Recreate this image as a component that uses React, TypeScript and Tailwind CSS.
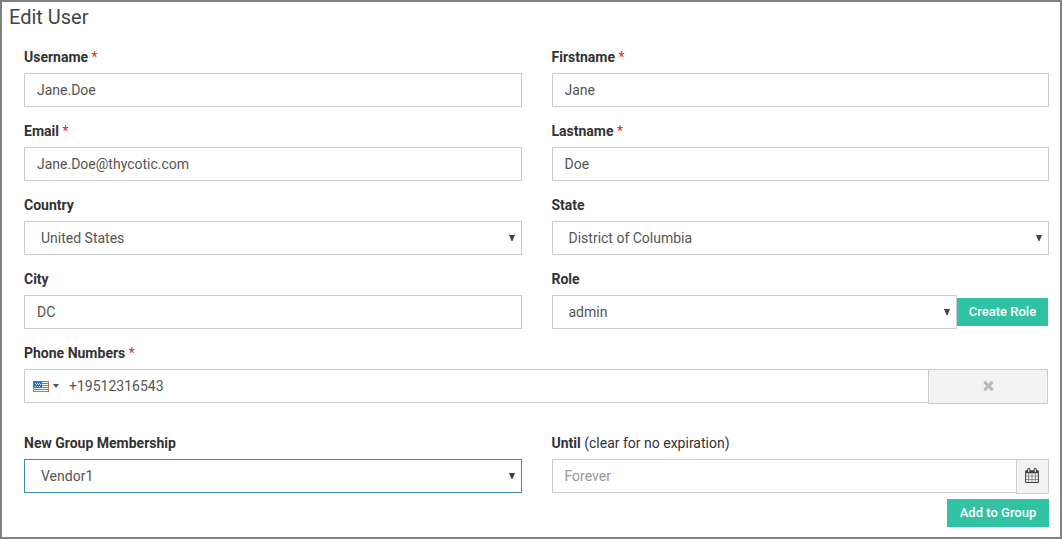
import { useState, type ReactNode, type InputHTMLAttributes, type SelectHTMLAttributes } from "react";

const control =
  "block h-[34px] w-full min-w-0 rounded-none border border-[#ccc] bg-white text-sm text-[#555] outline-none placeholder:text-[#999]";

function Label({ htmlFor, children, required }: { htmlFor: string; children: ReactNode; required?: boolean }) {
  return (
    <label htmlFor={htmlFor} className="mb-1.5 block text-sm leading-5 font-bold text-[#333]">
      {children}
      {required && <span className="font-normal text-[#e02b2b]"> *</span>}
    </label>
  );
}

function TextInput(props: InputHTMLAttributes<HTMLInputElement>) {
  return <input {...props} className={`${control} px-3`} />;
}

function Select({
  options,
  active,
  ...props
}: SelectHTMLAttributes<HTMLSelectElement> & { options: string[]; active?: boolean }) {
  return (
    <div className="relative min-w-0 flex-1">
      <select
        {...props}
        className={
          active
            ? "block h-[34px] w-full appearance-none rounded-none border border-[#3c8dbc] bg-white px-4 text-sm text-[#555] outline-none"
            : `${control} appearance-none px-4`
        }
      >
        {options.map((option) => (
          <option key={option}>{option}</option>
        ))}
      </select>
      <svg
        viewBox="0 0 6 6"
        className="pointer-events-none absolute top-3.5 right-[7px] size-1.5 fill-[#444]"
        aria-hidden="true"
      >
        <path d="M0 0H6L3.5 6H2.5Z" />
      </svg>
    </div>
  );
}

function Flag() {
  return (
    <svg viewBox="0 0 16 11" className="h-[11px] w-4" shapeRendering="crispEdges" aria-hidden="true">
      <rect width="16" height="11" fill="#fff" />
      <path d="M0 2H16V3H0ZM0 4H16V5H0ZM0 6H16V7H0ZM0 8H16V9H0Z" fill="#f0503c" />
      <rect x="1" y="1" width="8" height="6" fill="#1f6fe8" />
      <path
        d="M2 2h1v1H2zM4 2h1v1H4zM6 2h1v1H6zM3 3h1v1H3zM5 3h1v1H5zM7 3h1v1H7zM2 5h1v1H2zM4 5h1v1H4zM6 5h1v1H6z"
        fill="#cfe2ff"
      />
      <path d="M0 0H16V11H0ZM1 1V10H15V1Z" fillRule="evenodd" fill="#c8754f" />
      <path d="M0 0H9V1H0ZM0 1H1V7H0Z" fill="#6b79a8" />
    </svg>
  );
}

function TimesIcon() {
  return (
    <svg viewBox="0 0 1792 1792" className="mb-0.5 size-[15px] fill-current" aria-hidden="true">
      <path d="M1490 1322q0 40-28 68l-136 136q-28 28-68 28t-68-28l-294-294-294 294q-28 28-68 28t-68-28l-136-136q-28-28-28-68t28-68l294-294-294-294q-28-28-28-68t28-68l136-136q28-28 68-28t68 28l294 294 294-294q28-28 68-28t68 28l136 136q28 28 28 68t-28 68l-294 294 294 294q28 28 28 68z" />
    </svg>
  );
}

function CalendarIcon() {
  return (
    <svg viewBox="64 0 1664 1792" className="mr-0.5 mb-0.5 h-[15px] w-3.5 fill-current" aria-hidden="true">
      <path d="M192 1664h288v-288h-288v288zm352 0h320v-288h-320v288zm-352-352h288v-320h-288v320zm352 0h320v-320h-320v320zm-352-384h288v-288h-288v288zm736 736h320v-288h-320v288zm-384-736h320v-288h-320v288zm768 736h288v-288h-288v288zm-384-352h320v-320h-320v320zm-352-864v-288q0-13-9.5-22.5t-22.5-9.5h-64q-13 0-22.5 9.5t-9.5 22.5v288q0 13 9.5 22.5t22.5 9.5h64q13 0 22.5-9.5t9.5-22.5zm736 864h288v-320h-288v320zm-384-384h320v-288h-320v288zm384 0h288v-288h-288v288zm32-480v-288q0-13-9.5-22.5t-22.5-9.5h-64q-13 0-22.5 9.5t-9.5 22.5v288q0 13 9.5 22.5t22.5 9.5h64q13 0 22.5-9.5t9.5-22.5zm384-64v1280q0 52-38 90t-90 38h-1408q-52 0-90-38t-38-90v-1280q0-52 38-90t90-38h128v-96q0-66 47-113t113-47h64q66 0 113 47t47 113v96h384v-96q0-66 47-113t113-47h64q66 0 113 47t47 113v96h128q52 0 90 38t38 90z" />
    </svg>
  );
}

const greenButton = "h-7 shrink-0 bg-[#30c2a3] text-[13px] font-medium text-white";

export default function App() {
  const [phone, setPhone] = useState("+19512316543");

  return (
    <main className="min-h-screen border-2 border-[#808080] bg-white font-[Roboto,sans-serif]">
      <h1 className="px-[7px] text-xl leading-[30px] text-[#444]">Edit User</h1>
      <form className="pt-[15px] pr-[11px] pb-2.5 pl-[22px]" onSubmit={(event) => event.preventDefault()}>
        <div className="grid grid-cols-2 gap-x-[30px] gap-y-3.5">
          <div>
            <Label htmlFor="username" required>Username</Label>
            <TextInput id="username" defaultValue="Jane.Doe" />
          </div>
          <div>
            <Label htmlFor="firstname" required>Firstname</Label>
            <TextInput id="firstname" defaultValue="Jane" />
          </div>
          <div>
            <Label htmlFor="email" required>Email</Label>
            <TextInput id="email" type="email" defaultValue="Jane.Doe@thycotic.com" />
          </div>
          <div>
            <Label htmlFor="lastname" required>Lastname</Label>
            <TextInput id="lastname" defaultValue="Doe" />
          </div>
          <div>
            <Label htmlFor="country">Country</Label>
            <Select id="country" options={["United States"]} />
          </div>
          <div>
            <Label htmlFor="state">State</Label>
            <Select id="state" options={["District of Columbia"]} />
          </div>
          <div>
            <Label htmlFor="city">City</Label>
            <TextInput id="city" defaultValue="DC" />
          </div>
          <div>
            <Label htmlFor="role">Role</Label>
            <div className="flex items-center pr-px">
              <Select id="role" options={["admin"]} />
              <button type="button" className={`${greenButton} w-[91px]`}>Create Role</button>
            </div>
          </div>
          <div className="col-span-2">
            <Label htmlFor="phone" required>Phone Numbers</Label>
            <div className="flex items-start pr-px">
              <div className="flex h-[34px] min-w-0 flex-1 items-center border border-r-0 border-[#ccc] pl-2">
                <button type="button" aria-label="Country code" className="flex shrink-0 items-center gap-1">
                  <Flag />
                  <svg viewBox="0 0 6 4" className="h-1 w-1.5 fill-[#555]" aria-hidden="true">
                    <path d="M0 0H6L3 4Z" />
                  </svg>
                </button>
                <input
                  id="phone"
                  type="tel"
                  value={phone}
                  onChange={(event) => setPhone(event.target.value)}
                  className="h-8 min-w-0 flex-1 bg-transparent pl-2.5 text-sm text-[#555] outline-none"
                />
              </div>
              <button
                type="button"
                aria-label="Remove phone number"
                onClick={() => setPhone("")}
                className="flex h-[35px] w-[120px] shrink-0 items-center justify-center border border-[#ccc] bg-[#f3f3f3] text-[#b9b9b9]"
              >
                <TimesIcon />
              </button>
            </div>
          </div>
        </div>

        <div className="grid grid-cols-2 gap-x-[30px] pt-[29px]">
          <div>
            <Label htmlFor="group">New Group Membership</Label>
            <Select id="group" options={["Vendor1"]} active />
          </div>
          <div>
            <Label htmlFor="until">
              Until <span className="font-normal">(clear for no expiration)</span>
            </Label>
            <div className="flex items-start">
              <input id="until" placeholder="Forever" className={`${control} flex-1 border-r-0 px-3`} />
              <button
                type="button"
                aria-label="Choose date"
                className="flex h-[35px] w-[33px] shrink-0 items-center justify-center border border-[#ccc] bg-[#f3f3f3] text-[#444]"
              >
                <CalendarIcon />
              </button>
            </div>
          </div>
        </div>
        <div className="flex justify-end pt-[5px]">
          <button type="submit" className={`${greenButton} w-[102px]`}>Add to Group</button>
        </div>
      </form>
    </main>
  );
}
